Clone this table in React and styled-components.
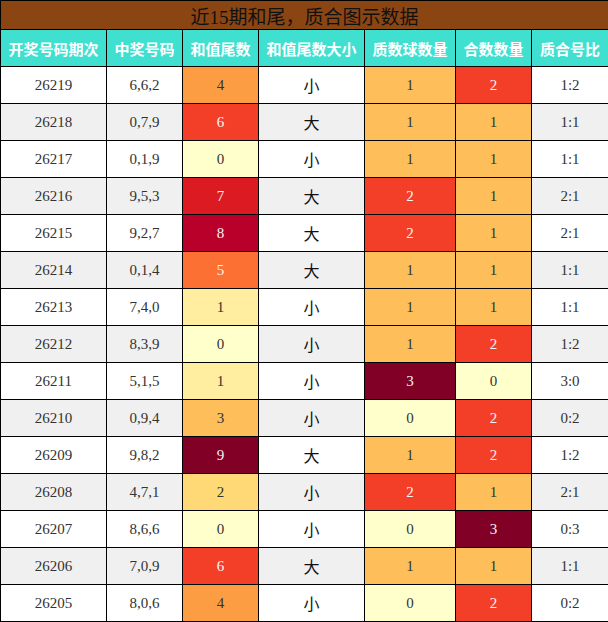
import styled, { createGlobalStyle } from 'styled-components';

const GlobalStyle = createGlobalStyle`
    body {
        margin: 0;
        background: #fff;
    }
`

const rows = [
    ['26219', '6,6,2', 4, '小', 1, 2, '1:2'],
    ['26218', '0,7,9', 6, '大', 1, 1, '1:1'],
    ['26217', '0,1,9', 0, '小', 1, 1, '1:1'],
    ['26216', '9,5,3', 7, '大', 2, 1, '2:1'],
    ['26215', '9,2,7', 8, '大', 2, 1, '2:1'],
    ['26214', '0,1,4', 5, '大', 1, 1, '1:1'],
    ['26213', '7,4,0', 1, '小', 1, 1, '1:1'],
    ['26212', '8,3,9', 0, '小', 1, 2, '1:2'],
    ['26211', '5,1,5', 1, '小', 3, 0, '3:0'],
    ['26210', '0,9,4', 3, '小', 0, 2, '0:2'],
    ['26209', '9,8,2', 9, '大', 1, 2, '1:2'],
    ['26208', '4,7,1', 2, '小', 2, 1, '2:1'],
    ['26207', '8,6,6', 0, '小', 0, 3, '0:3'],
    ['26206', '7,0,9', 6, '大', 1, 1, '1:1'],
    ['26205', '8,0,6', 4, '小', 0, 2, '0:2'],
];

// heat colours, light to dark
const tailColors = ['#ffffcc', '#ffeda0', '#fed976', '#febf5a', '#fd9d43', '#fd7034', '#f43f28', '#dc1a22', '#b9002a', '#800026'];
const countColors = ['#ffffcc', '#febf5a', '#f43f28', '#800026'];

const headers = ['开奖号码期次', '中奖号码', '和值尾数', '和值尾数大小', '质数球数量', '合数数量', '质合号比'];
const widths = [106, 76, 76, 106, 91, 76, 77];

const Table = styled.table`
    width: 608px;
    table-layout: fixed;
    border-collapse: collapse;
    font-family: "Liberation Serif", "Noto Sans CJK SC", serif;
`
const TitleCell = styled.th`
    height: 28px;
    padding: 0;
    background: #8b4513;
    color: #111;
    font-size: 19px;
    font-weight: normal;
    text-align: center;
    border: 1px solid #000;
`
const HeadCell = styled.th`
    height: 36px;
    padding: 0;
    background: #40e0d0;
    color: #fff;
    font-family: "Noto Sans CJK SC", sans-serif;
    font-size: 15px;
    font-weight: bold;
    border: 1px solid #000;
    white-space: nowrap;
`
const Row = styled.tr`
    background: ${p => (p.$alt ? '#f0f0f0' : '#fff')};
`
const Cell = styled.td`
    height: 36px;
    padding: 0;
    text-align: center;
    font-size: 15px;
    color: ${p => (p.$light ? '#f4f4f4' : '#333')};
    background: ${p => p.$bg || 'transparent'};
    border: 1px solid #000;
`
const SizeCell = styled(Cell)`
    font-family: "Noto Sans CJK SC", sans-serif;
    font-size: 16px;
    color: #111;
`

const App = () => {
    return (
        <>
            <GlobalStyle />
            <Table>
                <colgroup>
                    {widths.map((w, i) => <col key={i} style={{ width: w }} />)}
                </colgroup>
                <thead>
                    <tr>
                        <TitleCell colSpan={7}>近15期和尾，质合图示数据</TitleCell>
                    </tr>
                    <tr>
                        {headers.map((h) => <HeadCell key={h}>{h}</HeadCell>)}
                    </tr>
                </thead>
                <tbody>
                    {rows.map((r, i) => (
                        <Row key={r[0]} $alt={i % 2 === 1}>
                            <Cell>{r[0]}</Cell>
                            <Cell>{r[1]}</Cell>
                            <Cell $bg={tailColors[r[2]]} $light={r[2] >= 5}>{r[2]}</Cell>
                            <SizeCell>{r[3]}</SizeCell>
                            <Cell $bg={countColors[r[4]]} $light={r[4] >= 2}>{r[4]}</Cell>
                            <Cell $bg={countColors[r[5]]} $light={r[5] >= 2}>{r[5]}</Cell>
                            <Cell>{r[6]}</Cell>
                        </Row>
                    ))}
                </tbody>
            </Table>
        </>
    );
};

export default App;
